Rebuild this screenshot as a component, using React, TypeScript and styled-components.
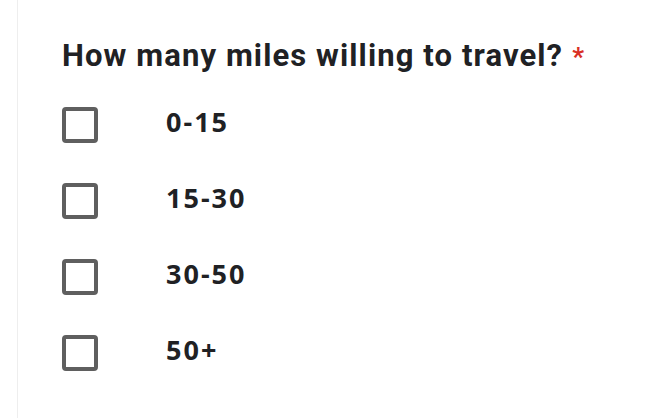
import styled, { createGlobalStyle } from 'styled-components';

const GlobalStyle = createGlobalStyle`
  html, body {
    margin: 0;
    padding: 0;
    background: #ffffff;
  }
  body {
    font-family: Roboto, "Liberation Sans", sans-serif;
  }
`;

const Page = styled.div`
  width: 670px;
  height: 418px;
  padding-left: 17px;
  box-sizing: border-box;
  overflow: hidden;
`;

const Card = styled.div`
  height: 100%;
  border-left: 1px solid #eeeeee;
  padding: 38px 0 0 44px;
  box-sizing: border-box;
`;

const Question = styled.h2`
  margin: 0;
  font-family: Roboto, sans-serif;
  font-size: 31px;
  font-weight: 700;
  line-height: 36px;
  color: #202124;
  letter-spacing: 1.1px;
  white-space: nowrap;
`;

const Required = styled.span`
  color: #d93025;
  font-size: 26px;
  margin-left: 9px;
  letter-spacing: 0;
`;

const Options = styled.ul`
  list-style: none;
  margin: 32px 0 0;
  padding: 0;
  display: flex;
  flex-direction: column;
  gap: 40px;
`;

const Option = styled.li`
  display: flex;
  align-items: center;
  height: 36px;
  gap: 68px;
`;

const Box = styled.span`
  width: 36px;
  height: 36px;
  box-sizing: border-box;
  border: 4px solid #5f5f5f;
  border-radius: 4px;
  flex-shrink: 0;
`;

const Label = styled.span`
  font-family: "Open Sans", sans-serif;
  font-size: 27px;
  font-weight: 700;
  line-height: 30px;
  color: #202124;
  letter-spacing: 2px;
  padding-bottom: 6px;
`;

const options = ['0-15', '15-30', '30-50', '50+'];

export default function App() {
  return (
    <>
      <GlobalStyle />
      <Page>
        <Card>
          <Question>
            How many miles willing to travel?<Required>*</Required>
          </Question>
          <Options>
            {options.map((o) => (
              <Option key={o}>
                <Box />
                <Label>{o}</Label>
              </Option>
            ))}
          </Options>
        </Card>
      </Page>
    </>
  );
}
